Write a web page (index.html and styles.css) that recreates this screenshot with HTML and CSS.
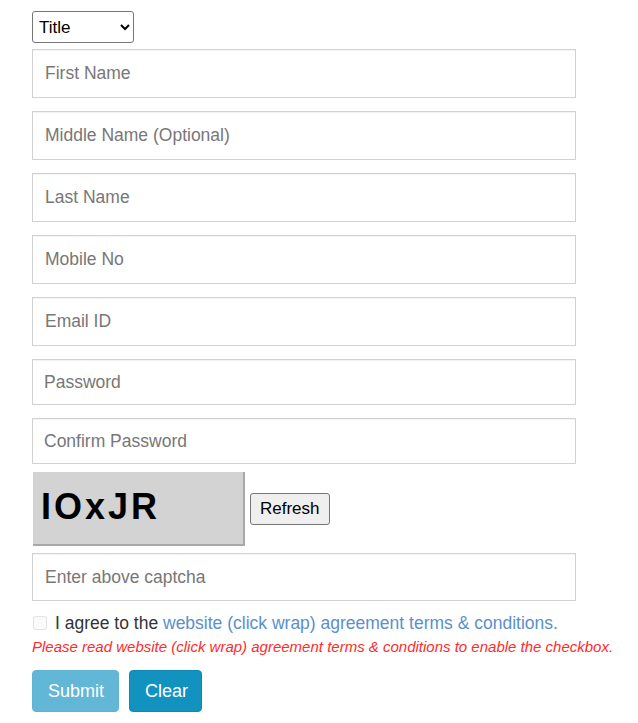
FILE: index.html
```html
<!DOCTYPE html>
<html lang="en">
<head>
<meta charset="utf-8">
<title>Register</title>
<link rel="stylesheet" href="styles.css">
</head>
<body>
<form class="reg-form">
  <select class="title-select">
    <option>Title</option>
    <option>Mr.</option>
    <option>Ms.</option>
    <option>Mrs.</option>
  </select>
  <input class="field field-tall" type="text" placeholder="First Name">
  <input class="field field-tall" type="text" placeholder="Middle Name (Optional)">
  <input class="field field-tall" type="text" placeholder="Last Name">
  <input class="field field-tall" type="text" placeholder="Mobile No">
  <input class="field field-tall" type="text" placeholder="Email ID">
  <input class="field field-short" type="password" placeholder="Password">
  <input class="field field-short" type="password" placeholder="Confirm Password">
  <div class="captcha-row">
    <div class="captcha-img"><span class="captcha-text">IOxJR</span></div>
    <button type="button" class="refresh-btn">Refresh</button>
  </div>
  <input class="field field-captcha" type="text" placeholder="Enter above captcha">
  <label class="agree-row">
    <input type="checkbox" class="agree-box" disabled>
    <span class="agree-text">I agree to the <a href="#" class="agree-link">website (click wrap) agreement terms &amp; conditions.</a></span>
  </label>
  <p class="agree-note">Please read website (click wrap) agreement terms &amp; conditions to enable the checkbox.</p>
  <div class="actions">
    <button type="button" class="btn btn-submit" disabled>Submit</button>
    <button type="button" class="btn btn-clear">Clear</button>
  </div>
</form>
</body>
</html>
```

FILE: styles.css
```css
html, body {
  margin: 0;
  padding: 0;
  background: #ffffff;
}

body {
  font-family: "Liberation Sans", Arial, sans-serif;
  color: #333333;
}

.reg-form {
  display: flex;
  flex-direction: column;
  align-items: flex-start;
  padding: 11px 0 0 32px;
  width: 544px;
}

.title-select {
  width: 102px;
  height: 32px;
  font-family: "Liberation Sans", Arial, sans-serif;
  font-size: 17px;
  color: #000;
  background: #fff;
  border: 1px solid #767676;
  border-radius: 3px;
  padding: 0 2px;
  margin: 0 0 6px 0;
}

.field {
  box-sizing: border-box;
  width: 544px;
  margin: 0 0 13px 0;
  padding: 0 12px;
  font-family: "Liberation Sans", Arial, sans-serif;
  font-size: 17.5px;
  color: #333;
  background: #fff;
  border: 1px solid #d2d2d2;
  border-radius: 0;
  box-shadow: inset 0 1px 1px rgba(0, 0, 0, 0.05);
  outline: none;
}

.field::placeholder {
  color: #777777;
  opacity: 1;
}

.field-tall {
  height: 49px;
}

.field-short {
  height: 46px;
  padding-left: 11px;
}

.field-captcha {
  height: 48px;
  margin-bottom: 0;
}

.captcha-row {
  display: flex;
  align-items: center;
  gap: 5px;
  margin: -5px 0 7px 1px;
}

.captcha-img {
  box-sizing: border-box;
  width: 212px;
  height: 74px;
  background: #d3d3d3;
  border-right: 2px solid #a8a8a8;
  border-bottom: 2px solid #a8a8a8;
  padding: 14px 0 0 8px;
}

.captcha-text {
  font-family: "Liberation Sans", Arial, sans-serif;
  font-weight: bold;
  font-size: 36px;
  letter-spacing: 3px;
  color: #000;
}

.refresh-btn {
  height: 32px;
  padding: 0 9px;
  font-family: "Liberation Sans", Arial, sans-serif;
  font-size: 17px;
  color: #000;
  background: #efefef;
  border: 1px solid #767676;
  border-radius: 3px;
}

.agree-row {
  display: flex;
  align-items: center;
  margin-top: 10px;
  height: 24px;
  font-size: 17.5px;
  line-height: 24px;
}

.agree-box {
  width: 14px;
  height: 14px;
  margin: 0 8px 0 1px;
  opacity: 0.6;
}

.agree-text {
  color: #333;
  white-space: nowrap;
}

.agree-link {
  color: #5a8fcc;
  text-decoration: none;
}

.agree-note {
  margin: 2px 0 0 0;
  font-size: 15px;
  line-height: 20px;
  font-style: italic;
  color: #ff2b2b;
  white-space: nowrap;
}

.actions {
  display: flex;
  gap: 10px;
  margin-top: 13px;
}

.btn {
  height: 42px;
  padding: 0 15px;
  font-family: "Liberation Sans", Arial, sans-serif;
  font-size: 18px;
  color: #fff;
  border: 1px solid transparent;
  border-radius: 4px;
}

.btn-submit {
  width: 87px;
  background: #62b6d6;
  border-color: #5fb3d3;
}

.btn-clear {
  width: 73px;
  background: #1192bf;
  border-color: #0f8ab5;
}
```
